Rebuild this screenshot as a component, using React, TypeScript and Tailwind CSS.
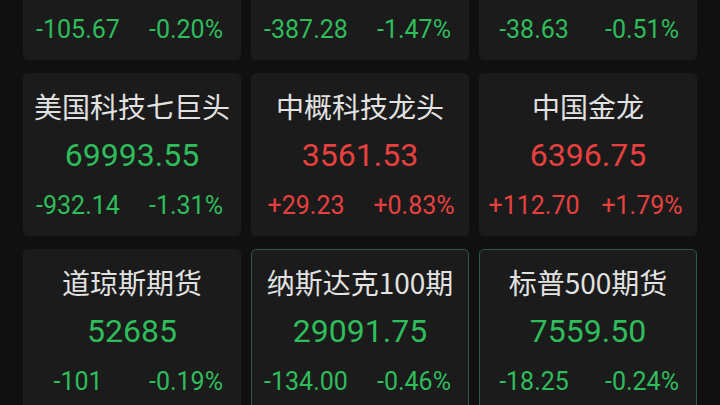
import React from "react";

type Quote = {
  name: string;
  price: string;
  change: string;
  pct: string;
  up: boolean;
  outlined?: boolean;
};

const quotes: Quote[] = [
  { name: "道琼斯", price: "52579.32", change: "-105.67", pct: "-0.20%", up: false },
  { name: "纳斯达克", price: "26018.79", change: "-387.28", pct: "-1.47%", up: false },
  { name: "标普500", price: "7535.26", change: "-38.63", pct: "-0.51%", up: false },
  { name: "美国科技七巨头", price: "69993.55", change: "-932.14", pct: "-1.31%", up: false },
  { name: "中概科技龙头", price: "3561.53", change: "+29.23", pct: "+0.83%", up: true },
  { name: "中国金龙", price: "6396.75", change: "+112.70", pct: "+1.79%", up: true },
  { name: "道琼斯期货", price: "52685", change: "-101", pct: "-0.19%", up: false },
  { name: "纳斯达克100期", price: "29091.75", change: "-134.00", pct: "-0.46%", up: false, outlined: true },
  { name: "标普500期货", price: "7559.50", change: "-18.25", pct: "-0.24%", up: false, outlined: true },
];

function QuoteCard({ q }: { q: Quote }) {
  const tone = q.up ? "text-[#e8403f]" : "text-[#2fbd5c]";
  return (
    <div
      className={
        "h-[163px] rounded-[5px] bg-[#1b1b1b] flex flex-col items-center pt-[14px] " +
        (q.outlined ? "border border-[#2c5a42]" : "border border-transparent")
      }
    >
      <div className="text-[28px] leading-[36px] text-[#e2e2e2] whitespace-nowrap [font-family:'Noto_Sans_CJK_SC',sans-serif]">
        {q.name}
      </div>
      <div className={"mt-[11px] text-[32px] leading-[40px] [font-family:Roboto,sans-serif] " + tone}>
        {q.price}
      </div>
      <div className={"mt-[14px] w-full grid grid-cols-2 text-[25px] leading-[34px] [font-family:Roboto,sans-serif] " + tone}>
        <span className="text-center">{q.change}</span>
        <span className="text-center">{q.pct}</span>
      </div>
    </div>
  );
}

export default function App() {
  return (
    <div className="w-[720px] h-[405px] overflow-hidden bg-[#101010]">
      <div className="mt-[-103px] px-[23px] grid grid-cols-3 gap-x-[10px] gap-y-[13px]">
        {quotes.map((q) => (
          <QuoteCard key={q.name} q={q} />
        ))}
      </div>
    </div>
  );
}
